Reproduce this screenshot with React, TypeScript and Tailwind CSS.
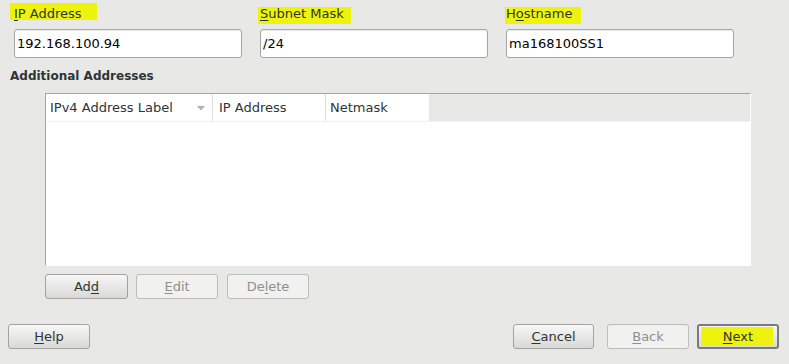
import React from "react";

const font = { fontFamily: '"DejaVu Sans", "Noto Sans", sans-serif' };

function Mn({ c }: { c: string }) {
  return <span className="underline decoration-1 underline-offset-[2px]">{c}</span>;
}

function Field({
  label,
  value,
  hl,
}: {
  label: React.ReactNode;
  value: string;
  hl: string;
}) {
  return (
    <div className="w-[228px] flex flex-col">
      <div className="relative h-[16px] leading-[16px] text-[13px] text-[#2e3436]">
        <span className={`absolute bg-[#eef30d] ${hl}`} />
        <span className="relative pl-[-1px]">{label}</span>
      </div>
      <div className="mt-[7px] h-[29px] bg-white border border-[#a6a6a6] rounded-[3px] shadow-[inset_0_1px_1px_rgba(0,0,0,0.08)] flex items-center pl-[2px] text-[13px] text-black">
        {value}
      </div>
    </div>
  );
}

function Btn({
  children,
  w,
  disabled,
  isDefault,
  highlight,
}: {
  children: React.ReactNode;
  w: string;
  disabled?: boolean;
  isDefault?: boolean;
  highlight?: boolean;
}) {
  const base = `${w} h-[25px] rounded-[3px] flex items-center justify-center text-[13px] relative`;
  if (disabled) {
    return (
      <div className={`${base} bg-[#f1f1f0] border border-[#bcbcbc] text-[#8f8f8f]`}>{children}</div>
    );
  }
  return (
    <div
      className={`${base} bg-gradient-to-b from-[#f7f7f7] to-[#d9d9d8] text-[#2e3436] ${
        isDefault ? "border-2 border-[#7b7b7b]" : "border border-[#a2a2a2]"
      }`}
    >
      {highlight && <span className="absolute left-[2px] right-[4px] top-[1px] bottom-[2px] bg-[#eef30d]" />}
      <span className="relative">{children}</span>
    </div>
  );
}

export default function App() {
  return (
    <div className="w-[789px] h-[364px] bg-[#e8e8e7] flex flex-col overflow-hidden" style={font}>
      <div className="flex pl-[14px] pt-[6px] gap-[18px]">
        <Field
          label={<><Mn c="I" />P Address</>}
          value="192.168.100.94"
          hl="left-[-4px] w-[87px] top-[-3px] h-[17px]"
        />
        <Field
          label={<><Mn c="S" />ubnet Mask</>}
          value="/24"
          hl="left-[-2px] w-[93px] top-[1px] h-[17px]"
        />
        <Field
          label={<>H<Mn c="o" />stname</>}
          value="ma168100SS1"
          hl="left-[-1px] w-[76px] top-[1px] h-[17px]"
        />
      </div>

      <div className="mt-[11px] pl-[10px] h-[15px] leading-[15px] text-[12px] font-bold text-[#2e3436]">
        Additional Addresses
      </div>

      <div className="mt-[9px] ml-[45px] w-[706px] h-[173px] flex flex-col border-t border-l border-[#a5a5a5] border-r border-r-white border-b border-b-white">
        <div className="h-[28px] flex text-[13px] text-[#2e3436] border-b border-[#f0f0f0]">
          <div className="w-[167px] bg-white border-r border-[#dedede] flex items-center pl-[4px] relative">
            IPv4 Address Label
            <svg className="absolute left-[151px] top-[12px]" width="8" height="5" viewBox="0 0 8 5">
              <path d="M0 0 L8 0 L4 4.5 Z" fill="#b0b0b0" />
            </svg>
          </div>
          <div className="w-[113px] bg-white border-r border-[#dedede] flex items-center pl-[6px]">IP Address</div>
          <div className="w-[103px] bg-white flex items-center pl-[4px]">Netmask</div>
          <div className="flex-1 bg-[#e8e8e7]" />
        </div>
        <div className="flex-1 bg-white" />
      </div>

      <div className="mt-[8px] ml-[45px] flex gap-[8px]">
        <Btn w="w-[83px]">Ad<Mn c="d" /></Btn>
        <Btn w="w-[82px]" disabled><Mn c="E" />dit</Btn>
        <div className="ml-[1px]">
          <Btn w="w-[82px]" disabled>De<Mn c="l" />ete</Btn>
        </div>
      </div>

      <div className="mt-[25px] flex pl-[8px] pr-[10px]">
        <Btn w="w-[82px]"><Mn c="H" />elp</Btn>
        <div className="flex-1" />
        <Btn w="w-[81px]"><Mn c="C" />ancel</Btn>
        <div className="w-[13px]" />
        <Btn w="w-[82px]" disabled><Mn c="B" />ack</Btn>
        <div className="w-[8px]" />
        <Btn w="w-[82px]" isDefault highlight><Mn c="N" />ext</Btn>
      </div>
    </div>
  );
}
